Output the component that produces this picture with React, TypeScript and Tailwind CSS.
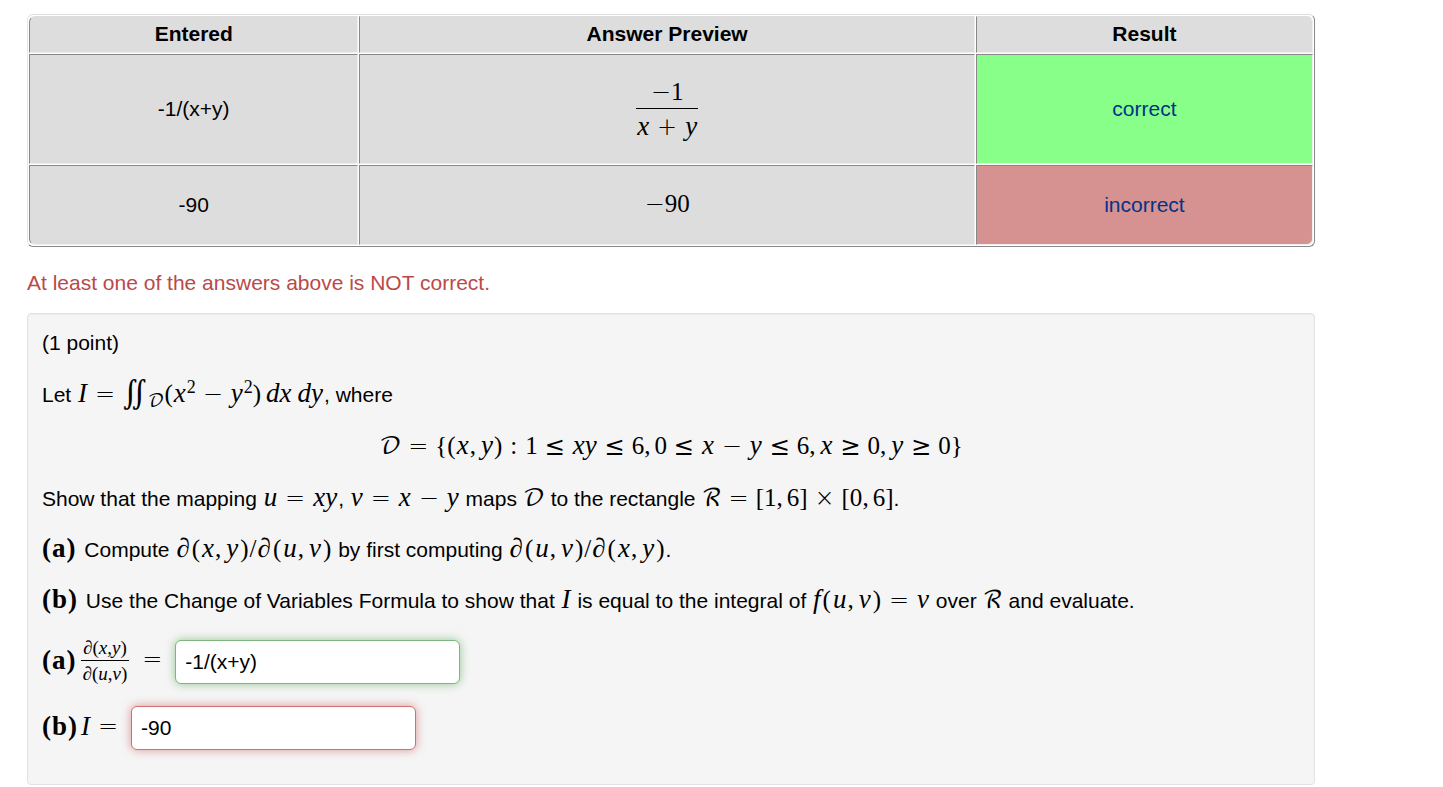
import type { ReactNode } from "react";

type Children = { children: ReactNode };

// Upright math: digits, brackets, commas
function M({ children }: Children) {
    return <span className="font-['Liberation_Serif',serif] text-[25px] leading-none whitespace-nowrap">{children}</span>;
}

// Italic variables
function V({ children }: Children) {
    return <i className="inline-block px-px font-['Liberation_Serif',serif] text-[27px] leading-none">{children}</i>;
}

// Relation or binary operator
function Op({ children }: Children) {
    return <span className="inline-block w-[34px] text-center font-['DejaVu_Sans','DejaVu_Math_TeX_Gyre',serif] text-2xl leading-none font-extralight">{children}</span>;
}

// Leading minus sign
function Neg() {
    return <span className="font-['DejaVu_Sans',sans-serif] text-2xl leading-none font-extralight">−</span>;
}

// Calligraphic capital
function Cal({ children }: Children) {
    return <span className="font-['DejaVu_Math_TeX_Gyre',serif] text-2xl leading-none">{children}</span>;
}

function Comma() {
    return <span className="mr-1">,</span>;
}

function Part({ children }: Children) {
    return (
        <b className="mr-[3px] font-['Liberation_Serif',serif] text-[27px] leading-none">
            (<span className="px-px">{children}</span>)
        </b>
    );
}

function Partial({ a, b }: { a: string; b: string }) {
    return (
        <>
            <V>∂</V><span className="px-px">(</span><V>{a}</V><Comma /><V>{b}</V><span className="px-px">)</span>
        </>
    );
}

const cell = "border border-t-[#888] border-l-[#888] border-r-[#eee] border-b-[#eee] bg-[#ddd] text-center align-middle";
const field = "h-11 w-[285px] rounded-md border bg-white px-[9px] text-[21px] outline-none";

export default function App() {
    return (
        <main className="min-h-screen bg-white pt-3.5 pr-32 pl-[27px] font-['Liberation_Sans',Arial,sans-serif] text-[21px] leading-[30px] text-black">
            <table className="w-full table-fixed border-separate border-spacing-px overflow-hidden rounded-md border border-t-[#ddd] border-r-[#888] border-b-[#888] border-l-[#e5e5e5] bg-white">
                <thead>
                    <tr className="h-[37px]">
                        <th className={`${cell} w-[25.7%] rounded-tl-md border-t-[#ddd] pb-0.5`}>Entered</th>
                        <th className={`${cell} w-[48%] border-t-[#ddd] pb-0.5`}>Answer Preview</th>
                        <th className={`${cell} rounded-tr-md border-t-[#ddd] pb-0.5`}>Result</th>
                    </tr>
                </thead>
                <tbody>
                    <tr className="h-[110px]">
                        <td className={cell}>-1/(x+y)</td>
                        <td className={cell}>
                            <M>
                                <span className="inline-flex flex-col items-center">
                                    <span className="pb-1"><Neg />1</span>
                                    <span className="border-t border-black pt-1">
                                        <V>x</V><Op>+</Op><V>y</V>
                                    </span>
                                </span>
                            </M>
                        </td>
                        <td className="border border-t-[#888] border-l-[#888] border-r-[#eee] border-b-[#eee] bg-[#8f8] text-center">
                            <a href="#answer-a" className="text-[#038]">correct</a>
                        </td>
                    </tr>
                    <tr className="h-20">
                        <td className={`${cell} rounded-bl-md`}>-90</td>
                        <td className={cell}>
                            <M><Neg />90</M>
                        </td>
                        <td className="rounded-br-md border border-t-[#888] border-l-[#888] border-r-[#eee] border-b-[#eee] bg-[#d69191] text-center">
                            <a href="#answer-b" className="text-[#038]">incorrect</a>
                        </td>
                    </tr>
                </tbody>
            </table>

            <p className="mt-[21px] text-[#b94a48]">At least one of the answers above is NOT correct.</p>

            <section className="mt-[15px] flex flex-col gap-[21px] rounded border border-[#e3e3e3] bg-[#f5f5f5] px-3.5 pt-3.5 pb-[34px] shadow-[inset_0_1px_1px_rgba(0,0,0,0.05)]">
                <p className="mb-px h-[30px]">(1 point)</p>
                <p className="h-[30px]">
                    Let{" "}
                    <M>
                        <V>I</V><Op>=</Op>
                        <span className="font-['DejaVu_Math_TeX_Gyre',serif] text-[28px] leading-none">∬</span>
                        <sub className="font-['DejaVu_Math_TeX_Gyre',serif] text-lg leading-none">𝒟</sub>
                        (<V>x</V><sup className="text-lg leading-none">2</sup><Op>−</Op><V>y</V><sup className="text-lg leading-none">2</sup>)
                        <span className="ml-1"><V>dx</V></span>
                        <span className="ml-1"><V>dy</V></span>
                    </M>
                    , where
                </p>
                <p className="my-px h-[30px] text-center">
                    <M>
                        <Cal>𝒟</Cal><Op>=</Op>{"{"}(<V>x</V><Comma /><V>y</V>)
                        <span className="mx-2">:</span>
                        1<Op>≤</Op><V>xy</V><Op>≤</Op>6<Comma />0<Op>≤</Op><V>x</V><Op>−</Op><V>y</V><Op>≤</Op>6<Comma />
                        <V>x</V><Op>≥</Op>0<Comma /><V>y</V><Op>≥</Op>0{"}"}
                    </M>
                </p>
                <p className="h-[30px]">
                    Show that the mapping <M><V>u</V><Op>=</Op><V>xy</V></M>, <M><V>v</V><Op>=</Op><V>x</V><Op>−</Op><V>y</V></M> maps{" "}
                    <Cal>𝒟</Cal> to the rectangle <M><Cal>ℛ</Cal><Op>=</Op>[1<Comma />6]<Op>×</Op>[0<Comma />6]</M>.
                </p>
                <p className="h-[30px]">
                    <Part>a</Part> Compute <M><Partial a="x" b="y" />/<Partial a="u" b="v" /></M> by first computing{" "}
                    <M><Partial a="u" b="v" />/<Partial a="x" b="y" /></M>.
                </p>
                <p className="h-[30px]">
                    <Part>b</Part> Use the Change of Variables Formula to show that <V>I</V> is equal to the integral of{" "}
                    <M><V>f</V><span className="px-px">(</span><V>u</V><Comma /><V>v</V><span className="px-px">)</span><Op>=</Op><V>v</V></M> over <Cal>ℛ</Cal> and evaluate.
                </p>
                <div className="mt-[3px] flex h-11 items-center">
                    <label htmlFor="answer-a" className="flex items-center pb-1">
                        <Part>a</Part>
                        <span className="ml-0.5 flex flex-col items-center font-['Liberation_Serif',serif] text-[19px] leading-[25px]">
                            <span className="px-0.5">∂(<i>x</i>,<i>y</i>)</span>
                            <span className="border-t border-black px-0.5">∂(<i>u</i>,<i>v</i>)</span>
                        </span>
                        <span className="mx-1.5"><Op>=</Op></span>
                    </label>
                    <input id="answer-a" type="text" defaultValue="-1/(x+y)" className={`${field} border-[#7cb67c] shadow-[0_0_10px_rgba(70,160,70,0.55)]`} />
                </div>
                <div className="mt-px flex items-center">
                    <label htmlFor="answer-b" className="mr-1.5 flex items-center pb-1">
                        <Part>b</Part><V>I</V><Op>=</Op>
                    </label>
                    <input id="answer-b" type="text" defaultValue="-90" className={`${field} border-[#d07070] shadow-[0_0_10px_rgba(200,70,70,0.55)]`} />
                </div>
            </section>
        </main>
    );
}
